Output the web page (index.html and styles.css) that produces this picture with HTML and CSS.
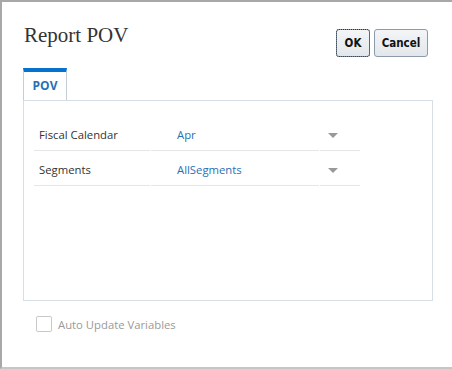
FILE: index.html
```html
<!DOCTYPE html>
<html lang="en">

<head>
    <meta charset="UTF-8">
    <title>Report POV</title>
    <link rel="stylesheet" href="styles.css">
</head>

<body>
    <div class="dialog">
        <div class="dialog-header">
            <h2 class="dialog-title">Report POV</h2>
            <div class="dialog-buttons">
                <button class="btn btn-ok">OK</button>
                <button class="btn btn-cancel">Cancel</button>
            </div>
        </div>

        <div class="tabs">
            <div class="tab tab-active">POV</div>
        </div>

        <div class="tab-panel">
            <div class="pov-row">
                <div class="pov-label">Fiscal Calendar</div>
                <div class="pov-value">Apr</div>
                <div class="pov-arrow"><span class="arrow"></span></div>
            </div>
            <div class="pov-row">
                <div class="pov-label">Segments</div>
                <div class="pov-value">AllSegments</div>
                <div class="pov-arrow"><span class="arrow"></span></div>
            </div>
        </div>

        <label class="check-row">
            <span class="checkbox"></span>
            <span class="check-text">Auto Update Variables</span>
        </label>
    </div>
</body>

</html>
```

FILE: styles.css
```css
* {
    padding: 0;
    margin: 0;
    box-sizing: border-box;
}

body {
    background: #ffffff;
    font-family: "Open Sans", "Noto Sans", sans-serif;
}

.dialog {
    height: 369px;
    border-top: 2px solid #a8a8a8;
    border-left: 2px solid #a8a8a8;
    border-bottom: 2px solid #c6c6c6;
    padding: 0 19px 0 21px;
}

.dialog-header {
    display: flex;
    justify-content: space-between;
    align-items: flex-start;
    height: 66px;
}

.dialog-title {
    font-family: "Liberation Serif", serif;
    font-weight: normal;
    font-size: 21px;
    color: #333;
    margin-top: 21px;
    margin-left: 1px;
}

.dialog-buttons {
    display: flex;
    gap: 4px;
    margin-top: 27px;
    margin-right: 5px;
}

.btn {
    height: 28px;
    border: 1px solid #8b9bab;
    border-radius: 3px;
    background: linear-gradient(#f3f5f7, #e3e7eb);
    font-family: "DejaVu Sans Condensed", "DejaVu Sans", sans-serif;
    font-weight: bold;
    font-size: 11.5px;
    color: #111;
}

.btn-ok {
    width: 34px;
    outline: 1px dotted #333;
    outline-offset: -1px;
}

.btn-cancel {
    width: 54px;
}

.tabs {
    display: flex;
}

.tab {
    width: 44px;
    height: 32px;
    border-top: 4px solid #0572ce;
    border-left: 1px solid #c4ced7;
    border-right: 1px solid #c4ced7;
    text-align: center;
    font-weight: bold;
    font-size: 12px;
    line-height: 27px;
    color: #2a6fb5;
}

.tab-panel {
    height: 201px;
    border: 1px solid #d6dfe6;
    padding: 15px 0 0 10px;
}

.pov-row {
    display: flex;
    width: 326px;
    height: 35px;
    font-size: 11.3px;
}

.pov-label,
.pov-value,
.pov-arrow {
    height: 100%;
    display: flex;
    align-items: center;
    padding-top: 3px;
    border-bottom: 1px solid #e6e6e6;
}

.pov-label {
    width: 116px;
    padding-left: 5px;
    color: #333;
}

.pov-value {
    width: 168px;
    padding-left: 26px;
    margin-left: 1px;
    color: #2a6fb5;
}

.pov-arrow {
    flex: 1;
    padding-left: 8px;
    margin-left: 1px;
}

.arrow {
    width: 0;
    height: 0;
    border-left: 5px solid transparent;
    border-right: 5px solid transparent;
    border-top: 5px solid #999;
    margin-top: 2px;
}

.check-row {
    display: flex;
    align-items: center;
    gap: 6px;
    margin-top: 15px;
    margin-left: 13px;
}

.checkbox {
    width: 16px;
    height: 16px;
    border: 1px solid #c9c9c9;
    border-radius: 2px;
    background: #fff;
}

.check-text {
    font-size: 11.3px;
    color: #9a9a9a;
}
```
